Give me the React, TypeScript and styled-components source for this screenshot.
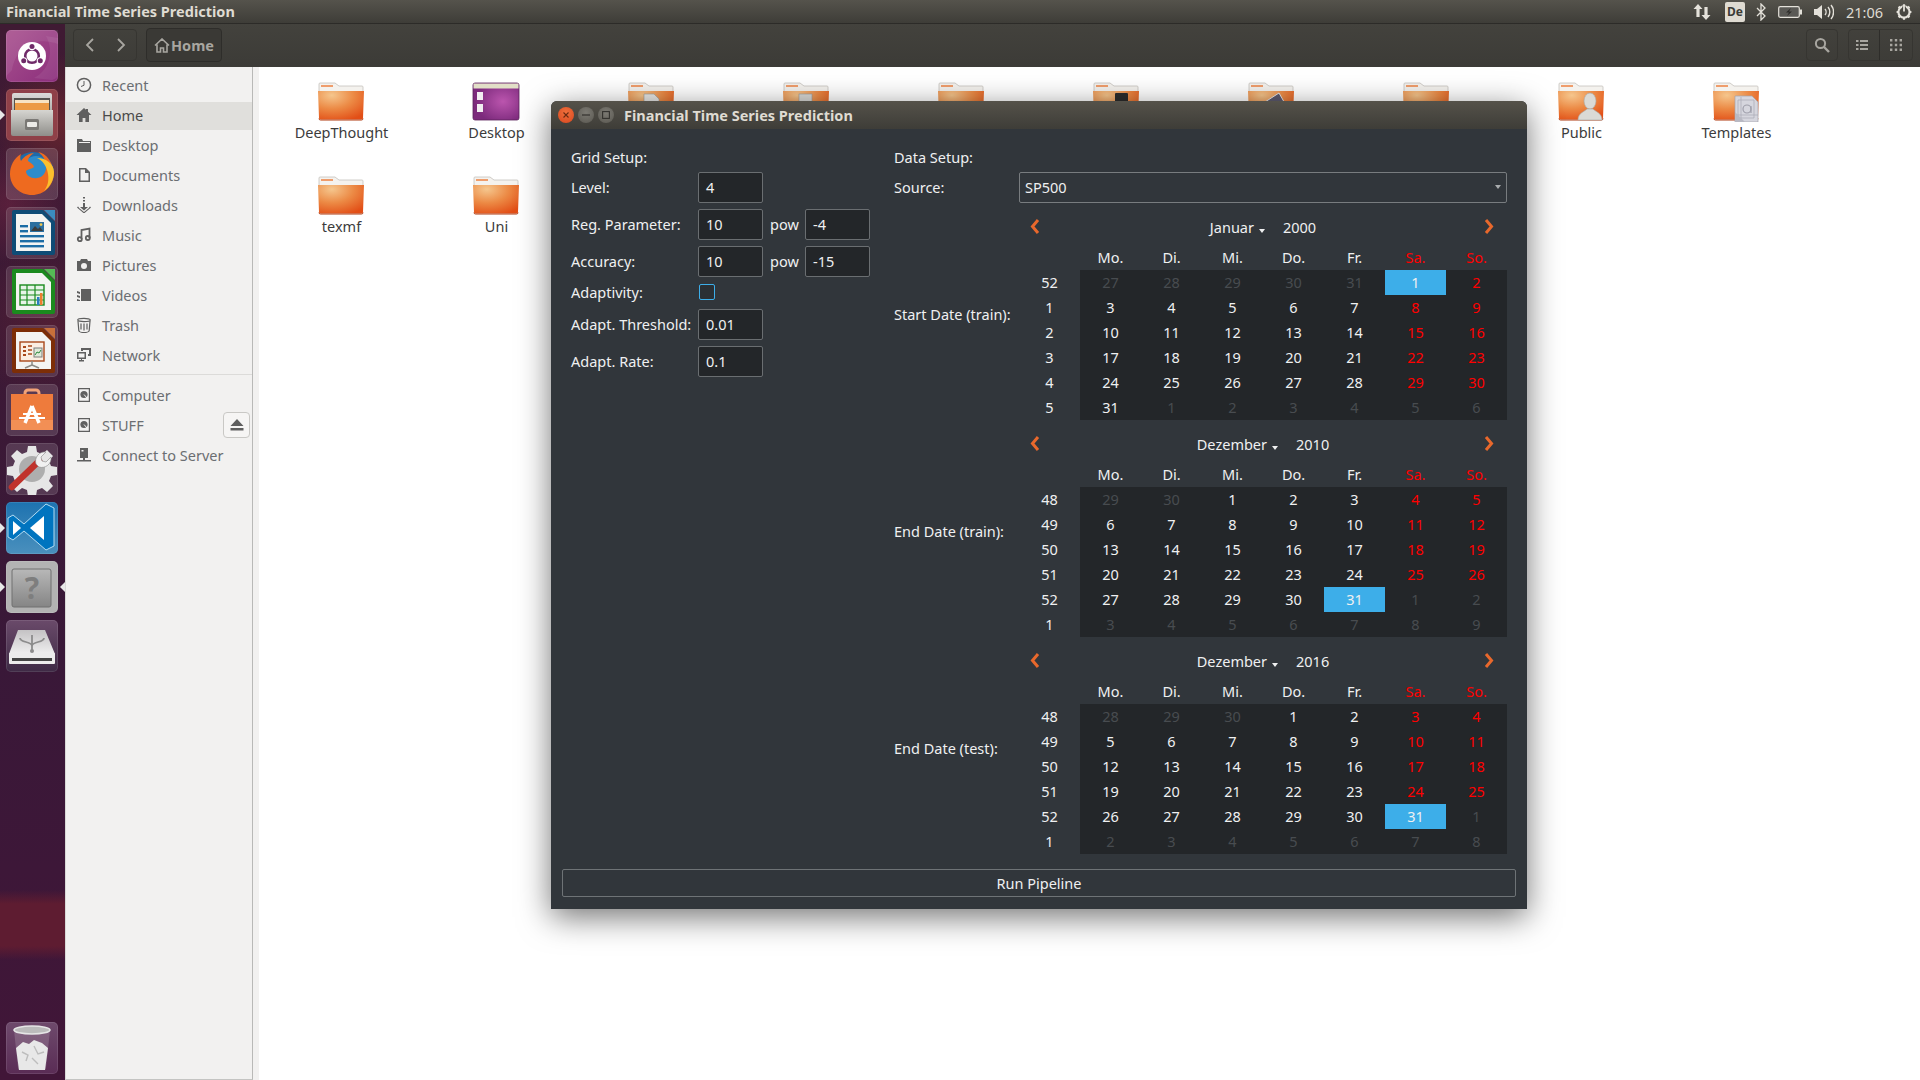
import React, { useId } from 'react';
import styled, { createGlobalStyle } from 'styled-components';

const FONT = '"Noto Sans", "Open Sans", sans-serif';

const GlobalStyle = createGlobalStyle`
    html, body {
        margin: 0;
        padding: 0;
        background: #fff;
        font-family: ${FONT};
    }
`;

type CalendarData = { label: string; monthName: string; year: number; month: number; selected: number };

const CALENDARS: CalendarData[] = [
    { label: 'Start Date (train):', monthName: 'Januar', year: 2000, month: 0, selected: 1 },
    { label: 'End Date (train):', monthName: 'Dezember', year: 2010, month: 11, selected: 31 },
    { label: 'End Date (test):', monthName: 'Dezember', year: 2016, month: 11, selected: 31 },
];

const WEEKDAYS = ['Mo.', 'Di.', 'Mi.', 'Do.', 'Fr.', 'Sa.', 'So.'];

const isoWeek = (date: Date) => {
    const d = new Date(Date.UTC(date.getFullYear(), date.getMonth(), date.getDate()));
    const day = d.getUTCDay() || 7;
    d.setUTCDate(d.getUTCDate() + 4 - day);
    const yearStart = new Date(Date.UTC(d.getUTCFullYear(), 0, 1));
    return Math.ceil(((d.getTime() - yearStart.getTime()) / 86400000 + 1) / 7);
};

const buildDays = (year: number, month: number) => {
    const offset = (new Date(year, month, 1).getDay() + 6) % 7;
    return Array.from({ length: 42 }, (_, i) => new Date(year, month, 1 - offset + i));
};

/* ---------- drawings ---------- */

const Tile = styled.div<{ $bg: string }>`
    position: relative;
    width: 52px;
    height: 52px;
    flex: none;
    border-radius: 5px;
    background: ${(p) => p.$bg};
    box-shadow: inset 0 0 0 1px rgba(255, 255, 255, 0.1);
    svg {
        display: block;
    }
`;

const Pip = styled.span<{ $side: 'left' | 'right' }>`
    position: absolute;
    top: 21px;
    ${(p) => (p.$side === 'left' ? 'left: -6px;' : 'right: -7px;')}
    width: 0;
    height: 0;
    border-top: 5px solid transparent;
    border-bottom: 5px solid transparent;
    ${(p) => (p.$side === 'left' ? 'border-left: 5px solid #e8e8e8;' : 'border-right: 5px solid #e8e8e8;')}
`;

const TileSvg: React.FC<{ children: React.ReactNode }> = ({ children }) => (
    <svg width="52" height="52" viewBox="0 0 52 52">
        {children}
    </svg>
);

const UbuntuIcon = () => (
    <TileSvg>
        <path d="M6 40C10 16 30 6 52 14V0H6a6 6 0 0 0-6 6v40z" fill="#fff" opacity="0.08" />
        <path d="M40 6c8 14 4 34-12 42l18 2c4-1 6-3 6-6V8z" fill="#fff" opacity="0.07" />
        <circle cx="26" cy="26" r="14" fill="#fff" />
        <circle cx="26" cy="26" r="6.8" fill="none" stroke="#6f2a68" strokeWidth="2.6" />
        <circle cx="26" cy="16.4" r="3.6" fill="#fff" />
        <circle cx="17.7" cy="30.8" r="3.6" fill="#fff" />
        <circle cx="34.3" cy="30.8" r="3.6" fill="#fff" />
        <circle cx="26" cy="16.4" r="2.5" fill="#6f2a68" />
        <circle cx="17.7" cy="30.8" r="2.5" fill="#6f2a68" />
        <circle cx="34.3" cy="30.8" r="2.5" fill="#6f2a68" />
    </TileSvg>
);

const FilesIcon = () => (
    <TileSvg>
        <defs>
            <linearGradient id="cabinet" x1="0" y1="0" x2="0" y2="1">
                <stop offset="0" stopColor="#d6d5d1" />
                <stop offset="1" stopColor="#8f8e8a" />
            </linearGradient>
            <linearGradient id="cabinetBack" x1="0" y1="0" x2="0" y2="1">
                <stop offset="0" stopColor="#dcdbd8" />
                <stop offset="1" stopColor="#a8a7a3" />
            </linearGradient>
        </defs>
        <rect x="6" y="4" width="40" height="22" rx="2" fill="url(#cabinetBack)" />
        <rect x="8" y="9" width="36" height="14" fill="#55524d" />
        <rect x="9" y="11" width="34" height="3" fill="#f7e3c4" />
        <rect x="9" y="14" width="34" height="9" fill="#ec9a45" />
        <path d="M5 21h42v24a2 2 0 0 1-2 2H7a2 2 0 0 1-2-2z" fill="url(#cabinet)" />
        <rect x="19" y="30" width="14" height="11" rx="1.5" fill="#7a7875" />
        <rect x="21" y="33" width="10" height="5" rx="1" fill="#ecebe8" />
    </TileSvg>
);

const FirefoxIcon = () => (
    <TileSvg>
        <circle cx="27" cy="25" r="21" fill="#1f6aa8" />
        <circle cx="30" cy="21" r="13" fill="#2e8ccb" />
        <path d="M48 24c0 14-10 23-22 23-12 0-22-9-22-21C4 18 8 10 15 6c-1 3-1 5 0 7 3-5 9-8 13-8-3 2-6 5-6 8 3 2 6 4 6 6-2 2-6 2-8 4 0 5 6 8 11 7 7-1 10-7 9-14-1-6-5-10-8-12 8 1 16 10 16 26z" fill="#ee6a1f" />
        <path d="M48 24c0 8-4 15-10 19 4-5 5-11 4-17-1-8-6-14-11-16 9 0 17 6 17 14z" fill="#fbc02d" />
    </TileSvg>
);

const LibreDoc: React.FC<{ edge: string; corner: string; children: React.ReactNode }> = ({ edge, corner, children }) => (
    <TileSvg>
        <path d="M8 3h29l12 12v31a2 2 0 0 1-2 2H8a2 2 0 0 1-2-2V5a2 2 0 0 1 2-2z" fill={edge} />
        <path d="M38 3l11 11V3z" fill={corner} />
        <path d="M10 7h26l9 9v28H10z" fill="#f4f4f2" />
        {children}
    </TileSvg>
);

const WriterIcon = () => (
    <LibreDoc edge="#0f4c76" corner="#3b8cc0">
        <rect x="14" y="18" width="8" height="2.4" fill="#1c6da5" />
        <rect x="14" y="23" width="8" height="2.4" fill="#1c6da5" />
        <rect x="14" y="28" width="24" height="2.4" fill="#1c6da5" />
        <rect x="14" y="33" width="24" height="2.4" fill="#1c6da5" />
        <rect x="14" y="38" width="24" height="2.4" fill="#1c6da5" />
        <rect x="24" y="15" width="14" height="10" fill="#2c6f9f" />
        <path d="M25 24l4-5 3 3 2-2 3 4z" fill="#3c3c3c" />
        <circle cx="35" cy="17.6" r="1.4" fill="#f2c94c" />
    </LibreDoc>
);

const CalcIcon = () => (
    <LibreDoc edge="#1b8a1e" corner="#55bb55">
        <rect x="14" y="19" width="24" height="20" fill="#e8f4e8" stroke="#1b8a1e" strokeWidth="1.4" />
        <path d="M14 24h24M14 29h24M14 34h24M21 19v20M29 19v20" stroke="#1b8a1e" strokeWidth="1.2" />
        <rect x="31" y="31" width="2.5" height="8" fill="#2c7cc0" />
        <rect x="34" y="27" width="2.5" height="12" fill="#ee7f2d" />
    </LibreDoc>
);

const ImpressIcon = () => (
    <LibreDoc edge="#7d2e07" corner="#c8703a">
        <rect x="14" y="17" width="24" height="19" fill="#fbeee2" stroke="#a8481a" strokeWidth="1.4" />
        <path d="M17 22h3M17 26h3M17 30h3" stroke="#a8481a" strokeWidth="2" />
        <path d="M22 21h4M22 25h4M22 29h4" stroke="#a8481a" strokeWidth="1.4" />
        <rect x="28" y="23" width="8" height="9" fill="#dfe9d8" stroke="#7c7c7c" />
        <path d="M29 30l2-3 2 1 2-3" stroke="#2c8a3d" fill="none" />
        <path d="M26 36v4M26 40l-7 3M26 40l7 3" stroke="#8a8a86" strokeWidth="1.5" fill="none" />
    </LibreDoc>
);

const SoftwareIcon = () => (
    <TileSvg>
        <path d="M19 14v-5a3 3 0 0 1 3-3h8a3 3 0 0 1 3 3v5" fill="none" stroke="#f2a378" strokeWidth="3" />
        <rect x="5" y="10" width="42" height="36" fill="#ee7b3c" />
        <rect x="5" y="36" width="42" height="10" fill="#f28f55" />
        <path d="M26 22l-7 17M26 22l7 17" stroke="#fff" strokeWidth="3.4" />
        <path d="M17 30h18M13 34h26" stroke="#fff" strokeWidth="2" />
    </TileSvg>
);

const ToolsIcon = () => (
    <TileSvg>
        <path d="M22 3h8l1 6 5 2 5-4 6 6-4 5 2 5 6 1v8l-6 1-2 5 4 5-6 6-5-4-5 2-1 6h-8l-1-6-5-2-5 4-6-6 4-5-2-5-6-1v-8l6-1 2-5-4-5 6-6 5 4 5-2z" fill="#e6e6e6" />
        <circle cx="26" cy="26" r="13" fill="#aeaeae" />
        <path d="M6 44L33 18" stroke="#c0332c" strokeWidth="6.5" strokeLinecap="round" />
        <path d="M30 21c-2-6 3-13 10-12l-5 5 1 4 4 1 5-5c1 7-6 12-12 10z" fill="#f1f1f1" stroke="#888" strokeWidth="0.6" />
    </TileSvg>
);

const VSCodeIcon = () => (
    <TileSvg>
        <path d="M2 16l5-3 11 9L40 2l8 4v38l-8 4-22-19-11 9-5-3z" fill="#0074bf" stroke="#b4dcf2" strokeWidth="1" />
        <path d="M7 19l8 7-8 7z" fill="#fff" />
        <path d="M38 14v24L24 26z" fill="#fff" />
    </TileSvg>
);

const HelpGlyph = styled.text`
    font-family: ${FONT};
    font-size: 30px;
    font-weight: 700;
    fill: #7e7e7e;
`;

const HelpIcon = () => (
    <TileSvg>
        <defs>
            <linearGradient id="helpFace" x1="0" y1="0" x2="0" y2="1">
                <stop offset="0" stopColor="#b8b8b8" />
                <stop offset="1" stopColor="#858585" />
            </linearGradient>
        </defs>
        <rect x="6" y="8" width="39" height="38" rx="2" fill="url(#helpFace)" stroke="#707070" />
        <HelpGlyph x="26" y="38" textAnchor="middle">?</HelpGlyph>
    </TileSvg>
);

const UsbIcon = () => (
    <TileSvg>
        <defs>
            <linearGradient id="usbTop" x1="0" y1="0" x2="0" y2="1">
                <stop offset="0" stopColor="#c4c2c4" />
                <stop offset="1" stopColor="#efefef" />
            </linearGradient>
        </defs>
        <path d="M12 10h27l10 24H3z" fill="url(#usbTop)" />
        <path d="M26 15v15M14 18c0 5 12 3 12 8M38 18c0 5-12 3-12 8" stroke="#8c8c8c" strokeWidth="1.8" fill="none" />
        <circle cx="26" cy="31" r="2" fill="#8c8c8c" />
        <rect x="3" y="33" width="46" height="11" rx="1" fill="#ececec" />
        <rect x="6" y="38" width="40" height="3" fill="#444" />
    </TileSvg>
);

const TrashIcon = () => (
    <TileSvg>
        <path d="M8 8l4 38a2 2 0 0 0 2 2h24a2 2 0 0 0 2-2l4-38z" fill="#fff" opacity="0.16" />
        <path d="M10 26l7-6 6 2 5-4 8 3 6 5-3 22H13z" fill="#e8e8e8" />
        <path d="M16 30l6 3-2 6M28 24l4 8 6-2M26 36l6 6" stroke="#bdbdbd" strokeWidth="1.4" fill="none" />
        <ellipse cx="26" cy="8" rx="18" ry="4" fill="#bcbcbc" stroke="#e6e6e6" strokeWidth="1.6" />
    </TileSvg>
);

type Badge = 'doc' | 'box' | 'film' | 'photo' | 'person' | 'template' | 'none';

const FolderIcon: React.FC<{ badge?: Badge }> = ({ badge = 'none' }) => {
    const id = useId();
    return (
        <svg width="48" height="40" viewBox="0 0 48 40">
            <defs>
                <radialGradient id={id} cx="0.3" cy="0.15" r="0.95">
                    <stop offset="0" stopColor="#f5c68d" />
                    <stop offset="0.5" stopColor="#ec8a45" />
                    <stop offset="1" stopColor="#e24e16" />
                </radialGradient>
            </defs>
            <path d="M2 2a1 1 0 0 1 1-1h15l4 3h23a1 1 0 0 1 1 1v6H2z" fill="#f4f2ee" stroke="#c5c2bc" strokeWidth="0.8" />
            <rect x="4" y="3" width="12" height="2" fill="#ef9d6c" />
            <path d="M1 9h46l-1 27a1.5 1.5 0 0 1-1.5 1.5h-41A1.5 1.5 0 0 1 2 36z" fill={`url(#${id})`} />
            <path d="M2 36.5a1.5 1.5 0 0 0 1.5 1.5h41a1.5 1.5 0 0 0 1.5-1.5" fill="none" stroke="#b03a10" strokeWidth="1" />
            {badge === 'doc' && <path d="M17 12h10l5 5v20H17z" fill="#e8e8e6" stroke="#9a9a98" strokeWidth="0.6" />}
            {badge === 'box' && <rect x="17" y="12" width="13" height="20" fill="#d9d9d6" stroke="#9a9a98" strokeWidth="0.6" />}
            {badge === 'film' && <rect x="23" y="11" width="13" height="24" rx="1" fill="#2c2c2c" />}
            {badge === 'photo' && <path d="M18 20l14-9 8 14-14 9z" fill="#5d5a70" stroke="#e6e6e6" strokeWidth="1" />}
            {badge === 'person' && (
                <g>
                    <ellipse cx="33" cy="19" rx="6" ry="8" fill="#dadad6" stroke="#a8a8a4" strokeWidth="0.6" />
                    <path d="M21 38c0-7 6-8 9-11h6c3 3 9 4 9 11z" fill="#dadad6" stroke="#a8a8a4" strokeWidth="0.6" />
                </g>
            )}
            {badge === 'template' && (
                <g>
                    <path d="M23 14h17l6 6v20H23z" fill="#d6d6de" stroke="#a4a4ae" strokeWidth="0.7" />
                    <path d="M26 18h16v18H26zM29 15v24M23 33h23" fill="none" stroke="#a9a9b5" strokeWidth="0.7" />
                    <circle cx="35" cy="27" r="4" fill="none" stroke="#9f9fab" strokeWidth="1.2" />
                    <path d="M39 24v7" stroke="#9f9fab" strokeWidth="1.2" />
                    <path d="M23 30l10 10H23z" fill="#b9b9c3" />
                </g>
            )}
        </svg>
    );
};

const DesktopFolderIcon = () => (
    <svg width="48" height="40" viewBox="0 0 48 40">
        <defs>
            <radialGradient id="desktopFill" cx="0.65" cy="0.5" r="0.6">
                <stop offset="0" stopColor="#bb55ae" />
                <stop offset="1" stopColor="#7c2a7c" />
            </radialGradient>
        </defs>
        <rect x="1" y="1" width="46" height="37" rx="2" fill="url(#desktopFill)" stroke="#5c225c" strokeWidth="0.8" />
        <rect x="1.5" y="1.5" width="45" height="5" fill="#e2dfc7" />
        <rect x="5" y="10" width="6" height="8" fill="#f1eef1" />
        <rect x="5" y="22" width="6" height="8" fill="#f1eef1" />
    </svg>
);

const sideIconPaths: Record<string, React.ReactNode> = {
    recent: (
        <g fill="none" stroke="currentColor" strokeWidth="1.5">
            <circle cx="8" cy="8" r="6.6" />
            <path d="M8 4v4.3l-3 1.2" strokeWidth="1" />
        </g>
    ),
    home: <path d="M8 1L0.5 8H3v7h3.6v-4h2.8v4H13V8h2.5L12 4.7V2h-2v.8z" fill="currentColor" />,
    desktop: <path d="M1 2h5l1 2h8v11H1zM3 5h11v1H3z" fill="currentColor" fillRule="evenodd" />,
    documents: <path d="M3 1h7l4 4v10H3zM4.5 2.5v11h8V6H9V2.5z" fill="currentColor" fillRule="evenodd" />,
    downloads: <path d="M7 0h2v1.5H7zM7 3h2v1.5H7zM7 6h2v4h3l-4 3.6L4 10h3zM2 9.5l1 1-.3.2L8 15l5.3-4.3-.3-.2 1-1 1 1L8 16.5 1 10.5z" fill="currentColor" />,
    music: (
        <g fill="none" stroke="currentColor" strokeWidth="1.8">
            <path d="M5.5 12V3l8-1.5V11" />
            <circle cx="3.8" cy="12.2" r="2" />
            <circle cx="11.8" cy="11" r="2" />
        </g>
    ),
    pictures: <path d="M5 2h6l1 2h3v10H1V4h3zM8 6a3 3 0 1 0 0 6 3 3 0 0 0 0-6z" fill="currentColor" fillRule="evenodd" />,
    videos: <path d="M5 2h10v12H5zM1 4l3 1v2L1 6zM1 8l3 1v2l-3-1zM1 12l3 1v1H1z" fill="currentColor" />,
    trash: (
        <g fill="none" stroke="currentColor" strokeWidth="1.2">
            <ellipse cx="8" cy="3" rx="6.3" ry="1.6" />
            <path d="M2 4l.8 9.5c.2 1.2 2.5 2 5.2 2s5-.8 5.2-2L14 4M5 6.5v6M8 6.5v7M11 6.5v6" />
        </g>
    ),
    network: <path d="M5 1h10v8h-3V7h1V3H7v1H5zM1 5h9v7H6v1h2v1.5H3V13h2v-1H1zM2.5 6.5v4h6v-4z" fill="currentColor" fillRule="evenodd" />,
    drive: (
        <g>
            <path d="M2 1h12v14H2zM3.2 2.2v11.6h9.6V2.2z" fill="currentColor" fillRule="evenodd" />
            <circle cx="8" cy="7.5" r="3.6" fill="currentColor" />
            <path d="M8 7.5l3 3.5" stroke="#f2f1f0" strokeWidth="1" />
        </g>
    ),
    server: <path d="M4 1h8v10H9v2h6v1.6H1V13h6v-2H4zM5.5 3v1.4h2V3z" fill="currentColor" fillRule="evenodd" />,
};

const SideIcon: React.FC<{ name: string }> = ({ name }) => (
    <svg width="16" height="16" viewBox="0 0 16 16">
        {sideIconPaths[name]}
    </svg>
);

/* ---------- page shell ---------- */

const Page = styled.div`
    position: relative;
    width: 1920px;
    height: 1080px;
    overflow: hidden;
    display: flex;
    flex-direction: column;
    background: #fff;
`;

const TopBar = styled.div`
    height: 24px;
    flex: none;
    display: flex;
    align-items: center;
    justify-content: space-between;
    padding: 0 8px 0 6px;
    background: linear-gradient(180deg, #55534c 0%, #3d3c37 100%);
    box-shadow: inset 0 -1px 0 #2c2b28;
`;

const AppTitle = styled.span`
    font-size: 14.5px;
    font-weight: 700;
    line-height: 22px;
    margin-bottom: 2px;
    color: #dfdbd2;
`;

const Indicators = styled.div`
    display: flex;
    align-items: center;
    gap: 12px;
    color: #e4e1da;
    svg {
        display: block;
    }
`;

const LangBox = styled.span`
    width: 20px;
    height: 20px;
    margin: 0 -1px 0 2px;
    border-radius: 2px;
    background: #dfdbd2;
    color: #3c3b37;
    font-size: 12px;
    font-weight: 700;
    line-height: 20px;
    text-align: center;
`;

const Clock = styled.span`
    font-size: 14.5px;
    color: #dfdbd2;
    margin: 0 1px 0 0;
`;

const Workspace = styled.div`
    flex: 1;
    display: flex;
    min-height: 0;
`;

const Launcher = styled.div`
    width: 65px;
    flex: none;
    box-sizing: border-box;
    display: flex;
    flex-direction: column;
    gap: 7px;
    padding: 6px 0 6px 6px;
    background:
        linear-gradient(180deg, transparent 866px, #5e1c31 880px, #5e1c31 922px, transparent 936px),
        radial-gradient(circle at 60px 100px, rgba(150, 50, 40, 0.45), transparent 70px),
        radial-gradient(circle at 10px 180px, rgba(130, 40, 70, 0.4), transparent 60px),
        radial-gradient(circle at 50px 300px, rgba(120, 40, 50, 0.35), transparent 80px),
        linear-gradient(180deg, #3f1a33 0%, #391838 60%, #411638 100%);
`;

const TrashSlot = styled.div`
    margin-top: auto;
`;

const FileWindow = styled.div`
    flex: 1;
    display: flex;
    flex-direction: column;
    min-width: 0;
`;

const Toolbar = styled.div`
    height: 43px;
    flex: none;
    box-sizing: border-box;
    display: flex;
    align-items: center;
    padding: 0 7px 1px 8px;
    background: linear-gradient(180deg, #43423d 0%, #3c3b37 100%);
`;

const ToolGroup = styled.div<{ $width: number; $left?: number; $auto?: boolean }>`
    width: ${(p) => p.$width}px;
    height: 32px;
    flex: none;
    display: flex;
    align-items: center;
    justify-content: space-around;
    margin-left: ${(p) => (p.$auto ? 'auto' : `${p.$left || 0}px`)};
    border-radius: 4px;
    border: 1px solid #363531;
    box-sizing: border-box;
    color: #a8a6a0;
`;

const ViewToggle = styled(ToolGroup)`
    justify-content: space-between;
    padding: 0 10px 0 7px;
`;

const PathButton = styled(ToolGroup)`
    height: 34px;
    background: #3a3935;
    border-color: #2e2d2a;
    justify-content: center;
    gap: 1px;
    font-size: 14.5px;
    font-weight: 700;
`;

const ViewDivider = styled.span`
    width: 1px;
    align-self: stretch;
    background: #2e2d2a;
`;

const FileBody = styled.div`
    flex: 1;
    display: flex;
    min-height: 0;
`;

const Sidebar = styled.div`
    width: 188px;
    flex: none;
    box-sizing: border-box;
    padding-top: 3px;
    background: #f2f1f0;
    border-right: 1px solid #b9b9b7;
    border-left: 1px solid #d8d8d6;
    border-bottom: 1px solid #c4c4c2;
`;

const SideRow = styled.div<{ $active?: boolean }>`
    position: relative;
    height: 30px;
    display: flex;
    align-items: center;
    gap: 10px;
    padding-left: 10px;
    font-size: 14.5px;
    color: ${(p) => (p.$active ? '#4a4a4a' : '#6b6e72')};
    background: ${(p) => (p.$active ? 'linear-gradient(180deg, transparent 2px, #e0dfdc 2px)' : 'transparent')};
    svg {
        flex: none;
        color: #5f5f5f;
    }
`;

const SideSeparator = styled.div`
    height: 1px;
    margin: 4px 0 5px;
    background: #dcdbd9;
`;

const EjectButton = styled.span`
    position: absolute;
    right: 2px;
    top: 2px;
    width: 27px;
    height: 26px;
    box-sizing: border-box;
    display: flex;
    align-items: center;
    justify-content: center;
    border: 1px solid #c9c8c5;
    border-radius: 4px;
    background: #f6f5f4;
`;

const SideGutter = styled.div`
    width: 6px;
    flex: none;
    background: #f2f1f0;
`;

const IconGrid = styled.div`
    flex: 1;
    display: grid;
    grid-template-columns: repeat(10, 155px);
    grid-auto-rows: 94px;
    align-content: start;
    padding: 15px 0 0 5px;
    background: #fff;
`;

const FileItem = styled.div`
    display: flex;
    flex-direction: column;
    align-items: center;
    svg {
        display: block;
        margin-left: -1px;
    }
`;

const FileLabel = styled.span`
    font-size: 14.5px;
    line-height: 20px;
    color: #3c3c3c;
`;

/* ---------- dialog ---------- */

const Dialog = styled.div`
    position: absolute;
    left: 551px;
    top: 101px;
    width: 976px;
    height: 808px;
    display: flex;
    flex-direction: column;
    border-radius: 6px 6px 0 0;
    background: #31363b;
    color: #eff0f1;
    font-size: 14.5px;
    box-shadow: 0 8px 32px rgba(0, 0, 0, 0.55);
`;

const TitleBar = styled.div`
    height: 28px;
    flex: none;
    display: flex;
    align-items: center;
    padding-left: 7px;
    border-radius: 6px 6px 0 0;
    background: linear-gradient(180deg, #55524a 0%, #3e3d38 100%);
`;

const WinButton = styled.span<{ $close?: boolean }>`
    width: 16px;
    height: 16px;
    margin-right: 4px;
    border-radius: 50%;
    display: flex;
    align-items: center;
    justify-content: center;
    background: ${(p) => (p.$close ? 'radial-gradient(circle at 50% 35%, #f0703c, #d8471f)' : 'radial-gradient(circle at 50% 35%, #7c7a73, #5a5851)')};
    color: ${(p) => (p.$close ? '#6b2a12' : '#33322e')};
`;

const DialogTitle = styled.span`
    margin-left: 6px;
    font-size: 14.5px;
    font-weight: 700;
    color: #dfdbd2;
`;

const DialogBody = styled.div`
    flex: 1;
    display: flex;
    flex-direction: column;
    padding: 14px 11px 12px;
`;

const Columns = styled.div`
    flex: 1;
    display: flex;
    gap: 24px;
    padding: 0 9px;
`;

const LeftForm = styled.div`
    width: 299px;
    flex: none;
    display: grid;
    grid-template-columns: 127px 65px 42px 65px;
    grid-auto-rows: min-content;
    align-content: start;
    row-gap: 6px;
`;

const SectionLabel = styled.div`
    grid-column: 1 / -1;
    height: 23px;
    line-height: 28px;
    white-space: nowrap;
`;

const FormLabel = styled.span`
    align-self: center;
    margin-top: -2px;
    white-space: nowrap;
`;

const TextBox = styled.div`
    height: 31px;
    box-sizing: border-box;
    padding-left: 7px;
    line-height: 28px;
    border: 1px solid #6a6e71;
    border-radius: 2px;
    background: #232629;
`;

const PowLabel = styled.span`
    align-self: center;
    margin-top: -2px;
    padding-left: 7px;
`;

const CheckRow = styled.div`
    grid-column: 2 / -1;
    height: 20px;
    display: flex;
    align-items: center;
`;

const CheckBox = styled.span`
    width: 16px;
    height: 16px;
    margin: -2px 0 0 1px;
    box-sizing: border-box;
    border: 1px solid #3daee9;
    border-radius: 2px;
    background: #2a3035;
`;

const Spacer = styled.span`
    grid-column: span 2;
`;

const RightColumn = styled.div`
    flex: 1;
    display: flex;
    flex-direction: column;
    min-width: 0;
`;

const DataRow = styled.div<{ $gap?: number }>`
    display: flex;
    align-items: center;
    margin-top: ${(p) => p.$gap || 0}px;
`;

const RowLabel = styled.span`
    width: 125px;
    flex: none;
    white-space: nowrap;
`;

const SourceLabel = styled(RowLabel)`
    padding-bottom: 2px;
`;

const CalendarLabel = styled(RowLabel)`
    padding-bottom: 5px;
`;

const ComboBox = styled.div`
    flex: 1;
    height: 31px;
    box-sizing: border-box;
    display: flex;
    align-items: center;
    justify-content: space-between;
    padding: 0 5px 2px;
    border: 1px solid #787c7f;
    border-radius: 2px;
`;

const DownCaret = styled.span`
    width: 0;
    height: 0;
    border-left: 3.5px solid transparent;
    border-right: 3.5px solid transparent;
    border-top: 4px solid #a9acae;
`;

const CalendarBox = styled.div`
    flex: 1;
    display: flex;
    flex-direction: column;
`;

const CalendarNav = styled.div`
    height: 30px;
    display: flex;
    align-items: center;
    justify-content: space-between;
    padding: 0 13px 0 11px;
    svg {
        margin-top: -2px;
    }
`;

const MonthPicker = styled.div`
    display: flex;
    align-items: center;
    gap: 18px;
    margin-left: 2px;
`;

const MonthName = styled.span`
    display: flex;
    align-items: center;
    gap: 5px;
    ${DownCaret} {
        margin-top: 7px;
        border-top-color: #eff0f1;
    }
`;

const CalGrid = styled.div`
    display: grid;
    grid-template-columns: repeat(8, 61px);
`;

const WeekdayCell = styled.div<{ $weekend: boolean }>`
    height: 28px;
    padding-top: 4px;
    box-sizing: border-box;
    line-height: 22px;
    text-align: center;
    color: ${(p) => (p.$weekend ? '#ff0000' : '#eff0f1')};
`;

const WeekCell = styled.div`
    height: 25px;
    line-height: 25px;
    text-align: center;
`;

type DayKind = 'normal' | 'weekend' | 'dim' | 'selected';

const dayColor: Record<DayKind, string> = {
    normal: '#eff0f1',
    weekend: '#ff0000',
    dim: '#484c50',
    selected: '#eff0f1',
};

const DayCell = styled.div<{ $kind: DayKind }>`
    height: 25px;
    line-height: 25px;
    text-align: center;
    background: ${(p) => (p.$kind === 'selected' ? '#3daee9' : '#232629')};
    color: ${(p) => dayColor[p.$kind]};
`;

const RunButton = styled.div`
    height: 28px;
    flex: none;
    box-sizing: border-box;
    margin-top: 15px;
    line-height: 27px;
    text-align: center;
    border: 1px solid #6e7376;
    border-radius: 2px;
`;

const Chevron: React.FC<{ dir: 'left' | 'right' }> = ({ dir }) => (
    <svg width="10" height="17" viewBox="0 0 10 17">
        <path d={dir === 'left' ? 'M8 2L2.5 8.5 8 15' : 'M2 2l5.5 6.5L2 15'} fill="none" stroke="#e8682c" strokeWidth="3" />
    </svg>
);

const Calendar: React.FC<{ data: CalendarData }> = ({ data }) => {
    const days = buildDays(data.year, data.month);
    return (
        <CalendarBox>
            <CalendarNav>
                <Chevron dir="left" />
                <MonthPicker>
                    <MonthName>
                        {data.monthName}
                        <DownCaret />
                    </MonthName>
                    <span>{data.year}</span>
                </MonthPicker>
                <Chevron dir="right" />
            </CalendarNav>
            <CalGrid>
                <span />
                {WEEKDAYS.map((name, i) => (
                    <WeekdayCell key={name} $weekend={i > 4}>
                        {name}
                    </WeekdayCell>
                ))}
                {days.map((day, i) => {
                    const inMonth = day.getMonth() === data.month;
                    let kind: DayKind = 'normal';
                    if (!inMonth) kind = 'dim';
                    else if (day.getDate() === data.selected) kind = 'selected';
                    else if (i % 7 > 4) kind = 'weekend';
                    return (
                        <React.Fragment key={i}>
                            {i % 7 === 0 && <WeekCell>{isoWeek(day)}</WeekCell>}
                            <DayCell $kind={kind}>{day.getDate()}</DayCell>
                        </React.Fragment>
                    );
                })}
            </CalGrid>
        </CalendarBox>
    );
};

const SIDEBAR_TOP = [
    { icon: 'recent', label: 'Recent' },
    { icon: 'home', label: 'Home', active: true },
    { icon: 'desktop', label: 'Desktop' },
    { icon: 'documents', label: 'Documents' },
    { icon: 'downloads', label: 'Downloads' },
    { icon: 'music', label: 'Music' },
    { icon: 'pictures', label: 'Pictures' },
    { icon: 'videos', label: 'Videos' },
    { icon: 'trash', label: 'Trash' },
    { icon: 'network', label: 'Network' },
];

const FOLDERS: { label: string; badge?: Badge; desktop?: boolean }[] = [
    { label: 'DeepThought' },
    { label: 'Desktop', desktop: true },
    { label: '', badge: 'doc' },
    { label: '', badge: 'box' },
    { label: '' },
    { label: '', badge: 'film' },
    { label: '', badge: 'photo' },
    { label: '' },
    { label: 'Public', badge: 'person' },
    { label: 'Templates', badge: 'template' },
    { label: 'texmf' },
    { label: 'Uni' },
];

const App: React.FC = () => (
    <Page>
        <GlobalStyle />
        <TopBar>
            <AppTitle>Financial Time Series Prediction</AppTitle>
            <Indicators>
                <svg width="18" height="18" viewBox="0 0 18 18">
                    <path d="M5 1l4.5 5H6.6v8H3.4V6H.5zM13 17l-4.5-5h2.9V4h3.2v8h2.9z" fill="currentColor" />
                </svg>
                <LangBox>De</LangBox>
                <svg width="10" height="18" viewBox="0 0 10 18">
                    <path d="M1 5l8 8-4 4V1l4 4-8 8" fill="none" stroke="currentColor" strokeWidth="1.3" />
                </svg>
                <svg width="24" height="14" viewBox="0 0 24 14">
                    <rect x="0.7" y="1.7" width="20.6" height="10.6" rx="1.5" fill="#5a5955" stroke="currentColor" strokeWidth="1.2" />
                    <rect x="22" y="4.5" width="2" height="5" fill="currentColor" />
                    <path d="M13 3l-5 4.5h3L9 11l5-4.5h-3z" fill="#2e2d2a" />
                </svg>
                <svg width="20" height="18" viewBox="0 0 20 18">
                    <path d="M0 6h3l5-4v14l-5-4H0z" fill="currentColor" />
                    <path d="M11 6c1.4 1.6 1.4 4.4 0 6M14 4c2.4 2.8 2.4 7.2 0 10M17 2c3.4 4 3.4 10 0 14" fill="none" stroke="currentColor" strokeWidth="1.4" />
                </svg>
                <Clock>21:06</Clock>
                <svg width="16" height="18" viewBox="0 0 16 18">
                    <circle cx="8" cy="9" r="5.6" fill="none" stroke="currentColor" strokeWidth="2.2" />
                    <path d="M8 1.2v2.4M8 14.4v2.4M.6 9H3M13 9h2.4M2.6 3.6l1.8 1.8M11.6 12.6l1.8 1.8M13.4 3.6l-1.8 1.8M4.4 12.6l-1.8 1.8" stroke="currentColor" strokeWidth="2.2" />
                    <path d="M8 3.5v5.5" stroke="#45443f" strokeWidth="3.6" />
                    <path d="M8 3v5.5" stroke="currentColor" strokeWidth="1.8" />
                </svg>
            </Indicators>
        </TopBar>
        <Workspace>
            <Launcher>
                <Tile $bg="linear-gradient(135deg, #a9528f, #8c2f7c)">
                    <UbuntuIcon />
                </Tile>
                <Tile $bg="#8f4048">
                    <Pip $side="left" />
                    <FilesIcon />
                </Tile>
                <Tile $bg="rgba(255,255,255,0.14)">
                    <FirefoxIcon />
                </Tile>
                <Tile $bg="rgba(255,255,255,0.12)">
                    <WriterIcon />
                </Tile>
                <Tile $bg="rgba(255,255,255,0.12)">
                    <CalcIcon />
                </Tile>
                <Tile $bg="rgba(255,255,255,0.12)">
                    <ImpressIcon />
                </Tile>
                <Tile $bg="rgba(255,255,255,0.14)">
                    <SoftwareIcon />
                </Tile>
                <Tile $bg="rgba(255,255,255,0.14)">
                    <ToolsIcon />
                </Tile>
                <Tile $bg="linear-gradient(180deg, #1d72b0, #4a90bd)">
                    <Pip $side="left" />
                    <VSCodeIcon />
                </Tile>
                <Tile $bg="#b3b3b3">
                    <Pip $side="left" />
                    <Pip $side="right" />
                    <HelpIcon />
                </Tile>
                <Tile $bg="linear-gradient(180deg, #6a4a6a, #3e2a45)">
                    <UsbIcon />
                </Tile>
                <TrashSlot>
                    <Tile $bg="linear-gradient(180deg, #6e4a6c, #5a2c55)">
                        <TrashIcon />
                    </Tile>
                </TrashSlot>
            </Launcher>
            <FileWindow>
                <Toolbar>
                    <ToolGroup $width={64}>
                        <svg width="12" height="16" viewBox="0 0 12 16">
                            <path d="M9 2L3 8l6 6" fill="none" stroke="currentColor" strokeWidth="1.8" />
                        </svg>
                        <svg width="12" height="16" viewBox="0 0 12 16">
                            <path d="M3 2l6 6-6 6" fill="none" stroke="currentColor" strokeWidth="1.8" />
                        </svg>
                    </ToolGroup>
                    <PathButton $width={76} $left={9}>
                        <svg width="16" height="15" viewBox="0 0 16 15">
                            <path d="M1 7.5L8 1l7 6.5M3 6.5V14h3.5v-4h3v4H13V6.5" fill="none" stroke="currentColor" strokeWidth="1.6" />
                        </svg>
                        Home
                    </PathButton>
                    <ToolGroup $width={32} $auto>
                        <svg width="16" height="16" viewBox="0 0 16 16">
                            <circle cx="6.5" cy="6.5" r="4.6" fill="none" stroke="currentColor" strokeWidth="2" />
                            <path d="M10 10l5 5" stroke="currentColor" strokeWidth="2.4" />
                        </svg>
                    </ToolGroup>
                    <ViewToggle $width={65} $left={10}>
                        <svg width="12" height="12" viewBox="0 0 12 12">
                            <path d="M0 1h2.5v2H0zM4 1h8v2H4zM0 5h2.5v2H0zM4 5h8v2H4zM0 9h2.5v2H0zM4 9h8v2H4z" fill="currentColor" />
                        </svg>
                        <ViewDivider />
                        <svg width="12" height="12" viewBox="0 0 12 12">
                            <path d="M0 0h2.4v2.4H0zM4.8 0h2.4v2.4H4.8zM9.6 0H12v2.4H9.6zM0 4.8h2.4v2.4H0zM4.8 4.8h2.4v2.4H4.8zM9.6 4.8H12v2.4H9.6zM0 9.6h2.4V12H0zM4.8 9.6h2.4V12H4.8zM9.6 9.6H12V12H9.6z" fill="currentColor" />
                        </svg>
                    </ViewToggle>
                </Toolbar>
                <FileBody>
                    <Sidebar>
                        {SIDEBAR_TOP.map((row) => (
                            <SideRow key={row.label} $active={row.active}>
                                <SideIcon name={row.icon} />
                                {row.label}
                            </SideRow>
                        ))}
                        <SideSeparator />
                        <SideRow>
                            <SideIcon name="drive" />
                            Computer
                        </SideRow>
                        <SideRow>
                            <SideIcon name="drive" />
                            STUFF
                            <EjectButton>
                                <svg width="14" height="12" viewBox="0 0 14 12">
                                    <path d="M7 0l6.5 7H.5zM.5 9h13v2.4H.5z" fill="#5f5f5f" />
                                </svg>
                            </EjectButton>
                        </SideRow>
                        <SideRow>
                            <SideIcon name="server" />
                            Connect to Server
                        </SideRow>
                    </Sidebar>
                    <SideGutter />
                    <IconGrid>
                        {FOLDERS.map((folder, i) => (
                            <FileItem key={i}>
                                {folder.desktop ? <DesktopFolderIcon /> : <FolderIcon badge={folder.badge} />}
                                <FileLabel>{folder.label}</FileLabel>
                            </FileItem>
                        ))}
                    </IconGrid>
                </FileBody>
            </FileWindow>
        </Workspace>
        <Dialog>
            <TitleBar>
                <WinButton $close>
                    <svg width="8" height="8" viewBox="0 0 8 8">
                        <path d="M1.5 1.5l5 5M6.5 1.5l-5 5" stroke="currentColor" strokeWidth="1.1" />
                    </svg>
                </WinButton>
                <WinButton>
                    <svg width="8" height="2" viewBox="0 0 8 2">
                        <path d="M0 1h8" stroke="currentColor" strokeWidth="1.2" />
                    </svg>
                </WinButton>
                <WinButton>
                    <svg width="8" height="8" viewBox="0 0 8 8">
                        <rect x="0.6" y="0.6" width="6.8" height="6.8" fill="none" stroke="currentColor" strokeWidth="1.1" />
                    </svg>
                </WinButton>
                <DialogTitle>Financial Time Series Prediction</DialogTitle>
            </TitleBar>
            <DialogBody>
                <Columns>
                    <LeftForm>
                        <SectionLabel>Grid Setup:</SectionLabel>
                        <FormLabel>Level:</FormLabel>
                        <TextBox>4</TextBox>
                        <Spacer />
                        <FormLabel>Reg. Parameter:</FormLabel>
                        <TextBox>10</TextBox>
                        <PowLabel>pow</PowLabel>
                        <TextBox>-4</TextBox>
                        <FormLabel>Accuracy:</FormLabel>
                        <TextBox>10</TextBox>
                        <PowLabel>pow</PowLabel>
                        <TextBox>-15</TextBox>
                        <FormLabel>Adaptivity:</FormLabel>
                        <CheckRow>
                            <CheckBox />
                        </CheckRow>
                        <FormLabel>Adapt. Threshold:</FormLabel>
                        <TextBox>0.01</TextBox>
                        <Spacer />
                        <FormLabel>Adapt. Rate:</FormLabel>
                        <TextBox>0.1</TextBox>
                        <Spacer />
                    </LeftForm>
                    <RightColumn>
                        <SectionLabel>Data Setup:</SectionLabel>
                        <DataRow $gap={6}>
                            <SourceLabel>Source:</SourceLabel>
                            <ComboBox>
                                SP500
                                <DownCaret />
                            </ComboBox>
                        </DataRow>
                        {CALENDARS.map((cal) => (
                            <DataRow key={cal.label} $gap={9}>
                                <CalendarLabel>{cal.label}</CalendarLabel>
                                <Calendar data={cal} />
                            </DataRow>
                        ))}
                    </RightColumn>
                </Columns>
                <RunButton>Run Pipeline</RunButton>
            </DialogBody>
        </Dialog>
    </Page>
);

export default App;
